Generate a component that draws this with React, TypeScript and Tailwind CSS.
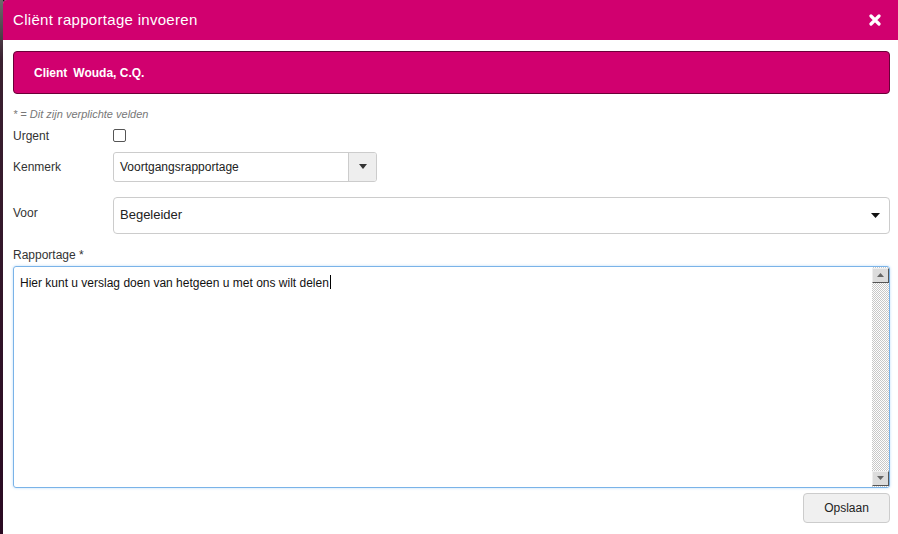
import React from "react";

export default function App() {
  return (
    <div className="flex h-[534px] w-[898px] bg-[#1e0618] font-['Liberation_Sans',Arial,sans-serif]">
      <div className="w-[3px] bg-[linear-gradient(#6b6b6b_0,#3a2030_60px,#2a0a22_100%)]" />
      <div className="flex flex-1 flex-col overflow-hidden rounded-tl-[4px] bg-white">
        <div className="flex h-[40px] shrink-0 items-center justify-between bg-[#d1006f] pl-[10px] pr-[17px]">
          <span className="text-[15px] tracking-[0.3px] text-white">Cliënt rapportage invoeren</span>
          <svg width="12" height="12" viewBox="0 0 12 12">
            <path d="M2 2 L10 10 M10 2 L2 10" stroke="white" strokeWidth="3.2" strokeLinecap="round" />
          </svg>
        </div>
        <div className="flex flex-col pl-[10px] pr-[8px]">
          <div className="mt-[11px] flex h-[43px] items-center rounded-[4px] border border-[#6a0038] bg-[#d1006f] pl-[20px] text-[12px] text-white">
            <span className="font-semibold">Client</span>
            <span className="ml-[6px] font-bold">Wouda, C.Q.</span>
          </div>
          <div className="mt-[12px] text-[11px] italic text-[#777]">* = Dit zijn verplichte velden</div>
          <div className="mt-[4px] flex h-[18px] items-center text-[12px] text-[#333]">
            <span className="w-[100px]">Urgent</span>
            <span className="h-[13px] w-[13px] rounded-[2px] border border-[#555] bg-white" />
          </div>
          <div className="mt-[7px] flex items-center text-[12px] text-[#333]">
            <span className="w-[100px]">Kenmerk</span>
            <div className="flex h-[30px] w-[264px] overflow-hidden rounded-[3px] border border-[#ccc]">
              <div className="flex flex-1 items-center pl-[6px] text-[12px] text-[#222]">Voortgangsrapportage</div>
              <div className="flex w-[28px] items-center justify-center border-l border-[#ccc] bg-[#eee]">
                <svg width="8" height="5" viewBox="0 0 8 5"><path d="M0 0 L8 0 L4 5 Z" fill="#333" /></svg>
              </div>
            </div>
          </div>
          <div className="mt-[15px] flex items-start text-[12px] text-[#333]">
            <span className="mt-[7px] w-[100px]">Voor</span>
            <div className="flex h-[37px] flex-1 items-center justify-between rounded-[4px] border border-[#ccc] pl-[6px] pr-[9px]">
              <span className="text-[13px] text-[#222]">Begeleider</span>
              <svg width="9" height="5" viewBox="0 0 9 5"><path d="M0 0 L9 0 L4.5 5 Z" fill="#111" /></svg>
            </div>
          </div>
          <div className="mt-[12px] text-[12px] text-[#333]">Rapportage *</div>
          <div className="mt-[2px] flex h-[222px] overflow-hidden rounded-[3px] border border-[#7ab3e8] shadow-[0_0_3px_#bcdcf8]">
            <div className="flex-1 pl-[6px] pt-[6px] text-[12px] text-[#111]">
              Hier kunt u verslag doen van hetgeen u met ons wilt delen<span className="ml-[1px] inline-block h-[14px] w-px translate-y-[2px] bg-black" />
            </div>
            <div className="flex w-[17px] flex-col bg-[repeating-conic-gradient(#c8c8c8_0_25%,#fff_0_50%)] bg-[length:2px_2px] pt-[1px] pb-[1px]">
              <div className="flex h-[15px] items-center justify-center border-b border-r border-[#555] border-t border-l border-t-[#eee] border-l-[#eee] bg-[#dcdcdc]">
                <svg width="7" height="4" viewBox="0 0 7 4"><path d="M0 4 L7 4 L3.5 0 Z" fill="#666" /></svg>
              </div>
              <div className="flex-1" />
              <div className="flex h-[15px] items-center justify-center border-b border-r border-[#555] border-t border-l border-t-[#eee] border-l-[#eee] bg-[#dcdcdc]">
                <svg width="7" height="4" viewBox="0 0 7 4"><path d="M0 0 L7 0 L3.5 4 Z" fill="#666" /></svg>
              </div>
            </div>
          </div>
          <div className="mt-[5px] flex justify-end">
            <button className="h-[30px] w-[87px] rounded-[4px] border border-[#ccc] bg-[#f0f0f0] text-[12px] text-[#222]">Opslaan</button>
          </div>
        </div>
      </div>
    </div>
  );
}
